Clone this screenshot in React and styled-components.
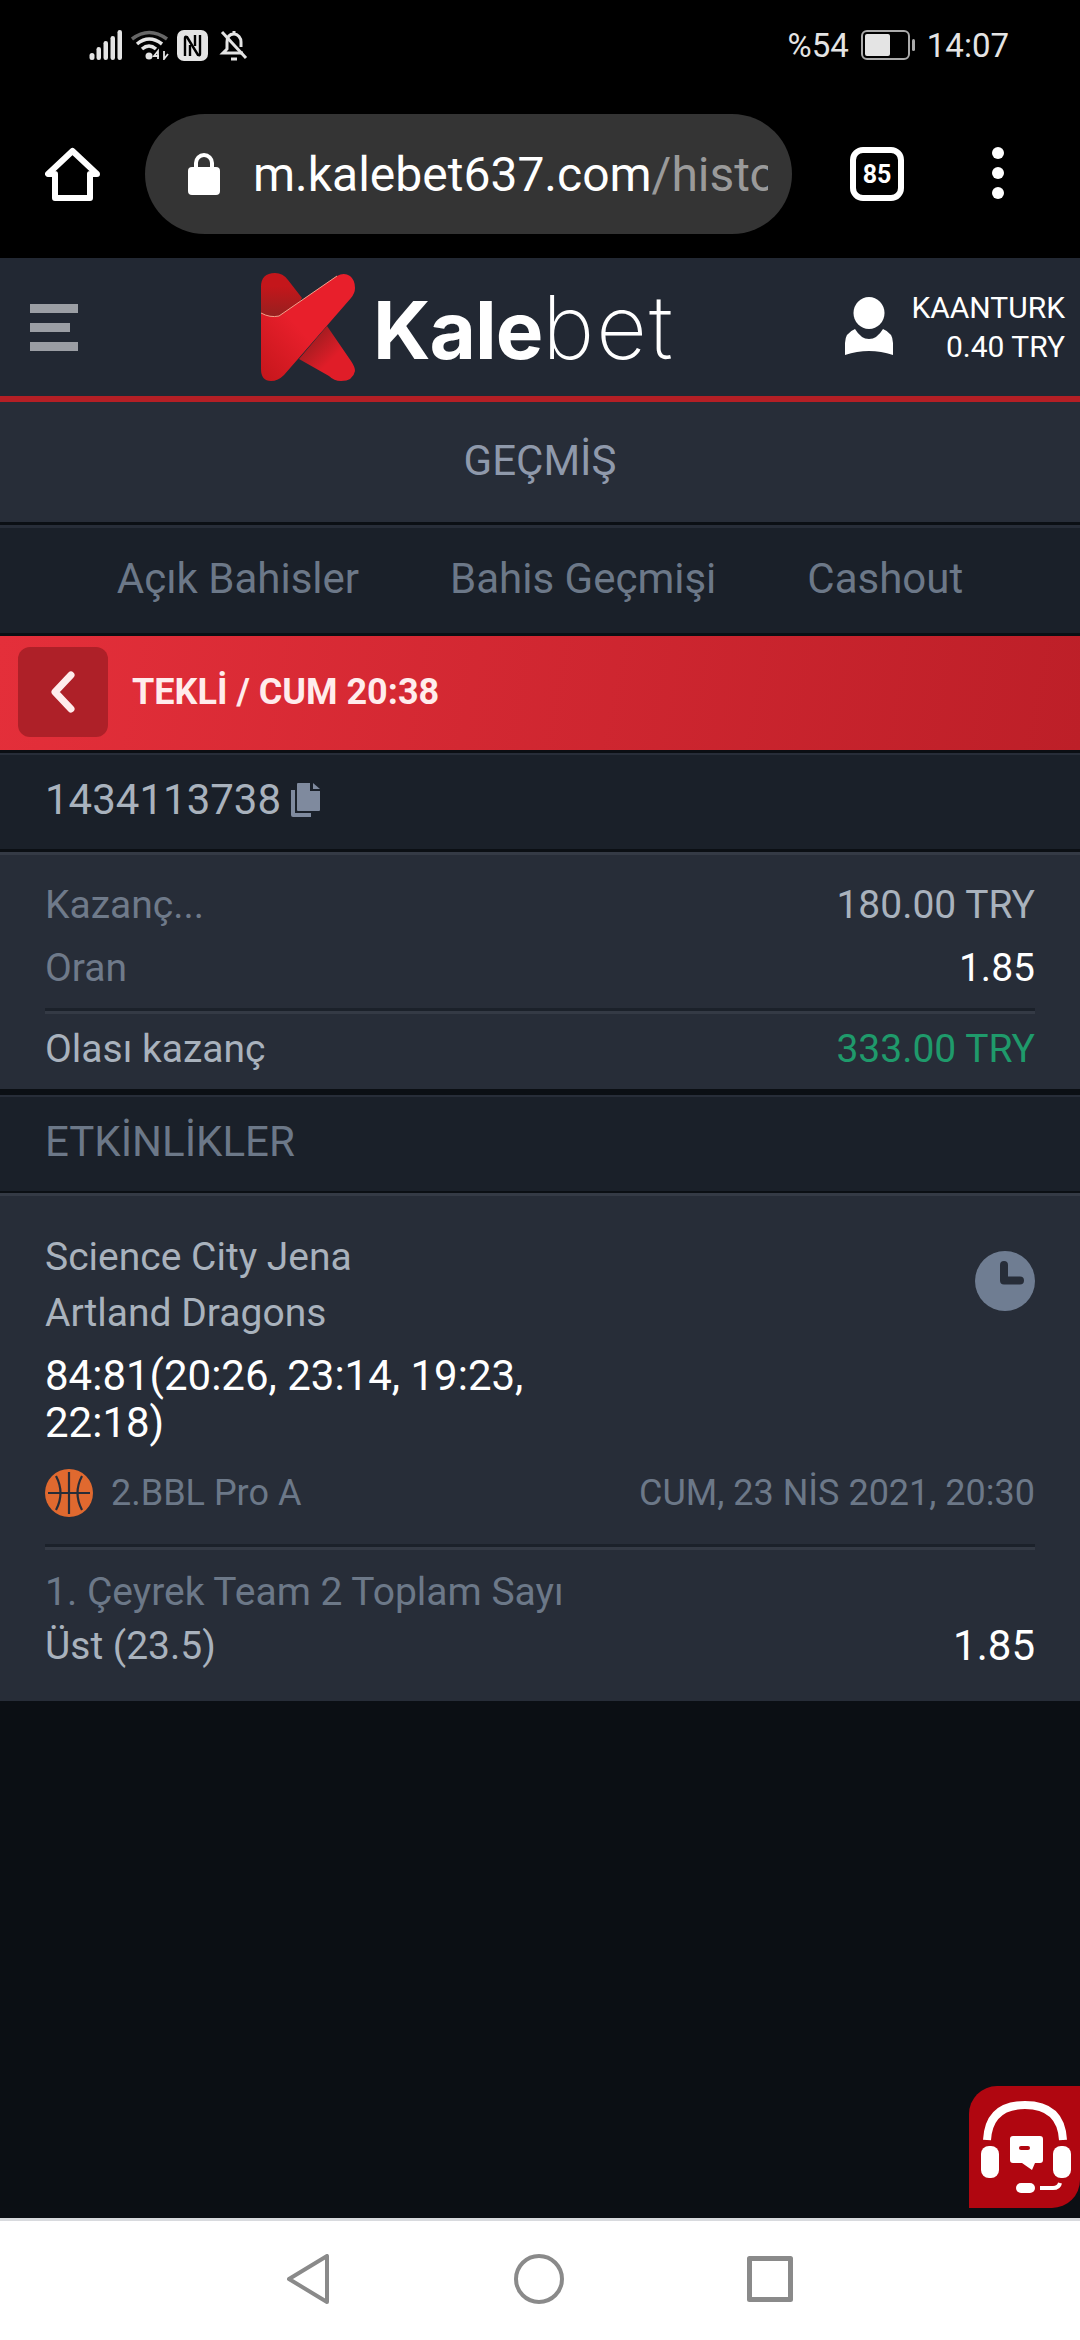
import React from 'react';
import styled, { createGlobalStyle } from 'styled-components';

const GlobalStyle = createGlobalStyle`
  html, body {
    margin: 0;
    padding: 0;
    background: #0b0f14;
  }
  * {
    box-sizing: border-box;
  }
`;

const Page = styled.div`
  position: relative;
  width: 1080px;
  height: 2340px;
  display: flex;
  flex-direction: column;
  overflow: hidden;
  font-family: Roboto, "Liberation Sans", sans-serif;
  font-size: 42px;
  background: #0b0f14;
`;

const BrowserChrome = styled.div`
  height: 258px;
  flex: none;
  background: #000;
`;

const StatusBar = styled.div`
  height: 90px;
  padding: 0 71px 0 89px;
  display: flex;
  align-items: center;
  justify-content: space-between;
  color: #e4e4e4;
  font-size: 33px;
`;

const StatusGroup = styled.div`
  display: flex;
  align-items: center;
  gap: ${(p) => p.$gap}px;
`;

const Toolbar = styled.div`
  height: 168px;
  padding: 24px 0 24px 45px;
  display: flex;
  align-items: flex-start;
`;

const HomeButton = styled.svg`
  width: 56px;
  height: 56px;
  margin-top: 33px;
  flex: none;
`;

const UrlPill = styled.div`
  width: 647px;
  height: 120px;
  margin-left: 44px;
  padding: 0 24px 0 43px;
  display: flex;
  align-items: center;
  gap: 33px;
  border-radius: 60px;
  background: #343434;
  flex: none;
`;

const UrlText = styled.div`
  flex: 1;
  overflow: hidden;
  white-space: nowrap;
  font-size: 48px;
  color: #fff;

  span {
    color: #9a9a9a;
  }
`;

const TabCount = styled.div`
  width: 54px;
  height: 54px;
  margin: 33px 0 0 58px;
  display: flex;
  align-items: center;
  justify-content: center;
  flex: none;
  border: 6px solid #fff;
  border-radius: 13px;
  color: #fff;
  font-size: 25px;
  font-weight: 700;
`;

const MenuDots = styled.svg`
  width: 14px;
  height: 52px;
  margin: 33px 0 0 87px;
  flex: none;
`;

const SiteHeader = styled.header`
  height: 144px;
  flex: none;
  padding: 0 15px 0 30px;
  display: flex;
  align-items: center;
  background: #222833;
  border-bottom: 6px solid #b51f25;
`;

const Burger = styled.div`
  width: 48px;
  display: flex;
  flex-direction: column;
  gap: 10px;
  flex: none;
`;

const BurgerBar = styled.div`
  height: 9px;
  width: ${(p) => p.$w}px;
  background: #9b9ea4;
`;

const Logo = styled.div`
  margin-left: 183px;
  display: flex;
  align-items: center;
  gap: 18px;
`;

const Wordmark = styled.div`
  font-family: Inter, "Noto Sans", sans-serif;
  font-size: 80px;
  font-weight: 700;
  line-height: 1;
  letter-spacing: -1px;
  color: #fff;

  span {
    font-size: 88px;
    font-weight: 200;
    letter-spacing: 2px;
  }
`;

const Account = styled.div`
  margin-left: auto;
  display: flex;
  align-items: center;
  gap: 18px;
`;

const AccountText = styled.div`
  text-align: right;
  color: #fff;
  font-size: 30px;
  line-height: 39px;
`;

const PageTitle = styled.div`
  height: 123px;
  flex: none;
  padding-bottom: 3px;
  display: flex;
  align-items: center;
  justify-content: center;
  background: #272d38;
  border-bottom: 3px solid #0b0f14;
  color: #8f99ab;
`;

const Tabs = styled.nav`
  height: 111px;
  flex: none;
  padding-bottom: 5px;
  display: flex;
  align-items: center;
  justify-content: center;
  gap: 91px;
  background: #1a2029;
  border-top: 3px solid #272d38;
  border-bottom: 3px solid #0b0f14;
  color: #6c7888;
`;

const BetBar = styled.div`
  height: 117px;
  flex: none;
  padding: 12px 0 15px 18px;
  display: flex;
  align-items: center;
  gap: 24px;
  background: linear-gradient(100deg, #e42f3a 0%, #bd1f28 100%);
  border-bottom: 3px solid #0b0f14;
  color: #ffecec;
  font-size: 36px;
  font-weight: 700;
`;

const BackButton = styled.div`
  width: 90px;
  height: 90px;
  display: flex;
  align-items: center;
  justify-content: center;
  border-radius: 12px;
  background: #ae2028;
`;

const Strip = styled.div`
  flex: none;
  height: ${(p) => p.$h}px;
  padding: 0 45px 5px;
  display: flex;
  align-items: center;
  gap: 10px;
  background: #1a2029;
  border-top: 2px solid #272d38;
  border-bottom: ${(p) => p.$bottom}px solid #0b0f14;
  color: ${(p) => p.$color};
`;

const Summary = styled.section`
  height: 243px;
  flex: none;
  padding: 19px 45px 0;
  background: #272d38;
  border-top: 3px solid #343a45;
  border-bottom: 6px solid #0b0f14;
`;

const Row = styled.div`
  height: ${(p) => p.$h}px;
  margin-top: ${(p) => p.$top || 0}px;
  display: flex;
  align-items: center;
  justify-content: space-between;
  color: ${(p) => p.$color};
  font-size: 39px;
  line-height: 1;
`;

const Value = styled.span`
  color: ${(p) => p.$color};
  font-size: ${(p) => p.$size || 39}px;
`;

const Divider = styled.div`
  height: 6px;
  margin-top: ${(p) => p.$top}px;
  background: linear-gradient(#1b212a 50%, #343a45 50%);
`;

const EventCard = styled.section`
  height: 508px;
  flex: none;
  padding: 33px 45px 0;
  background: #272d38;
  border-top: 3px solid #343a45;
`;

const EventTop = styled.div`
  display: flex;
  justify-content: space-between;
`;

const Teams = styled.div`
  width: 520px;
`;

const Team = styled.div`
  height: 56px;
  line-height: 56px;
  font-size: 39px;
  color: #a9b2bd;
`;

const Score = styled.div`
  margin-top: 11px;
  color: #fff;
  line-height: 47px;
`;

const ClockBadge = styled.svg`
  width: 60px;
  height: 60px;
  margin-top: 22px;
  flex: none;
`;

const LeagueRow = styled.div`
  height: 48px;
  margin-top: 23px;
  display: flex;
  align-items: center;
  color: #6c7888;
  font-size: 36px;
`;

const League = styled.div`
  margin-left: 18px;
`;

const EventDate = styled.div`
  margin-left: auto;
`;

const Market = styled.div`
  height: 40px;
  margin-top: 22px;
  line-height: 40px;
  font-size: 39px;
  color: #6c7888;
`;

const Spacer = styled.div`
  flex: 1;
`;

const NavBar = styled.div`
  height: 122px;
  flex: none;
  padding-bottom: 3px;
  display: flex;
  align-items: center;
  justify-content: center;
  gap: 183px;
  background: #fff;
  border-top: 3px solid #d8dade;
`;

const SupportButton = styled.div`
  position: absolute;
  right: 0;
  bottom: 132px;
  width: 111px;
  height: 122px;
  border-radius: 28px 0 28px 0;
  background: #b00610;
`;

const Gear = {
  Signal: () => (
    <svg width="34" height="30" viewBox="0 0 34 30" fill="#e4e4e4">
      <rect x="0.5" y="23" width="5" height="7" rx="2.5" />
      <rect x="7.5" y="17" width="4.5" height="13" rx="2.2" />
      <rect x="14.5" y="11" width="4.5" height="19" rx="2.2" />
      <rect x="21.5" y="6" width="4.5" height="24" rx="2.2" />
      <rect x="28.5" y="0" width="4.5" height="30" rx="2.2" />
    </svg>
  ),
  Wifi: () => (
    <svg width="38" height="30" viewBox="0 0 38 30" fill="none">
      <path d="M1 9 Q18 -4 36 9" stroke="#666" strokeWidth="3.5" />
      <path d="M6 14 Q18 4 31 14" stroke="#e4e4e4" strokeWidth="3.5" />
      <path d="M11 19 Q18 13 25 19" stroke="#e4e4e4" strokeWidth="3.5" />
      <circle cx="18" cy="26" r="3.5" fill="#e4e4e4" />
      <path d="M27 29V21l-4 5h5M33 21v8l4-5" stroke="#e4e4e4" strokeWidth="1.8" />
    </svg>
  ),
  Nfc: () => (
    <svg width="31" height="31" viewBox="0 0 31 31">
      <rect width="31" height="31" rx="7" fill="#e4e4e4" />
      <path d="M8 26V8q0-2 2-1l11 18q2 1 2-1V5" fill="none" stroke="#000" strokeWidth="2.4" />
      <path d="M13 26V15M18 5v11" fill="none" stroke="#000" strokeWidth="2.4" />
    </svg>
  ),
  Bell: () => (
    <svg width="32" height="31" viewBox="-4 0 32 31" fill="none" stroke="#e4e4e4" strokeWidth="3">
      <path d="M14 4c-5 0-7 3-7 8v7l-4 4h20M21 17v-5c0-4-3-8-7-8" />
      <path d="M2 2l24 26" />
      <path d="M11 29h6" />
      <path d="M14 1v3" />
    </svg>
  ),
  Battery: () => (
    <svg width="54" height="30" viewBox="0 0 54 30">
      <rect x="1" y="1" width="47" height="28" rx="5" fill="none" stroke="#aaa" strokeWidth="2" />
      <rect x="4" y="4" width="25" height="22" rx="2" fill="#e4e4e4" />
      <rect x="51" y="9" width="3" height="12" rx="1.5" fill="#aaa" />
    </svg>
  ),
  Lock: () => (
    <svg width="32" height="42" viewBox="0 0 32 42" style={{ flex: 'none' }}>
      <path d="M8 16V10a8 8 0 0 1 16 0v6" fill="none" stroke="#fff" strokeWidth="4" />
      <rect y="14" width="32" height="28" rx="4" fill="#fff" />
    </svg>
  ),
  KaleLogo: () => (
    <svg width="94" height="108" viewBox="0 0 94 108">
      <defs>
        <linearGradient id="armTop" x1="0" y1="1" x2="1" y2="0">
          <stop offset="0" stopColor="#c4161b" />
          <stop offset="0.45" stopColor="#e81f2b" />
          <stop offset="1" stopColor="#e81f2b" />
        </linearGradient>
        <linearGradient id="foldLeft" x1="0.5" y1="0" x2="0.5" y2="1">
          <stop offset="0.3" stopColor="#c4161b" />
          <stop offset="1" stopColor="#96201f" />
        </linearGradient>
        <linearGradient id="foldLow" x1="0" y1="0" x2="1" y2="1">
          <stop offset="0.1" stopColor="#8f1c1e" />
          <stop offset="0.6" stopColor="#e01d28" />
        </linearGradient>
      </defs>
      <path d="M0 14Q0 0 14 0Q22 0 27 7L41 25L30 44L0 44Z" fill="url(#foldLeft)" />
      <path d="M38 86L66 53L90 88Q94 94 94 98Q92 108 80 108Q73 108 68 103Z" fill="url(#foldLow)" />
      <path d="M76 3Q83 -1 89 3Q94 7 94 15Q94 20 90 25L23 102Q17 108 10 108Q0 108 0 96L0 40Q9 45 18 43Z" fill="url(#armTop)" />
      <path d="M0 40Q9 45 18 43L76 3" fill="none" stroke="#f3a08a" strokeWidth="1" />
    </svg>
  ),
  User: () => (
    <svg width="48" height="60" viewBox="0 0 48 60" fill="#fff">
      <ellipse cx="24" cy="16" rx="15.5" ry="16" />
      <path d="M10 32Q16 42 24 42Q32 42 38 32Q48 36 48 46V58Q36 54 24 54Q12 54 0 58V46Q0 36 10 32Z" />
    </svg>
  ),
  Copy: () => (
    <svg width="29" height="34" viewBox="0 0 29 34" fill="#7f8a9e" style={{ flex: 'none' }}>
      <path d="M7 0h12v8h10v19a1 1 0 0 1-1 1H7a1 1 0 0 1-1-1V1a1 1 0 0 1 1-1z" />
      <path d="M22 0l7 6h-7z" />
      <path d="M0 7h4v23h16v4H2a2 2 0 0 1-2-2z" />
    </svg>
  ),
  Ball: () => (
    <svg width="48" height="48" viewBox="0 0 48 48" style={{ flex: 'none' }}>
      <circle cx="24" cy="24" r="24" fill="#e0692f" />
      <g fill="none" stroke="#272d38" strokeWidth="2.2">
        <path d="M24 3v42M3 24h42" />
        <path d="M11 7Q20 24 11 41M37 7Q28 24 37 41" />
      </g>
    </svg>
  ),
  Headset: () => (
    <svg width="111" height="122" viewBox="0 0 111 122">
      <path d="M18 54Q20 19 56 19Q92 19 94 54" fill="none" stroke="#fff" strokeWidth="8" />
      <rect x="12" y="60" width="18" height="32" rx="8" fill="#fff" />
      <rect x="84" y="60" width="18" height="32" rx="8" fill="#fff" />
      <path d="M44 50H71a3 3 0 0 1 3 3V74a3 3 0 0 1-3 3H66L63 84L53 77H44a3 3 0 0 1-3-3V53a3 3 0 0 1 3-3Z" fill="#fff" />
      <rect x="50" y="60" width="11" height="4" rx="2" fill="#b00610" />
      <rect x="47" y="97" width="19" height="10" rx="5" fill="#fff" />
      <path d="M71 102H84Q90 102 91 97" fill="none" stroke="#fff" strokeWidth="4" />
    </svg>
  ),
};

const App = () => (
  <Page>
    <GlobalStyle />
    <BrowserChrome>
      <StatusBar>
        <StatusGroup $gap={8}>
          <Gear.Signal />
          <Gear.Wifi />
          <Gear.Nfc />
          <Gear.Bell />
        </StatusGroup>
        <StatusGroup $gap={12}>
          <span>%54</span>
          <Gear.Battery />
          <span>14:07</span>
        </StatusGroup>
      </StatusBar>
      <Toolbar>
        <HomeButton viewBox="0 0 56 56" fill="none" stroke="#fff" strokeWidth="6" strokeLinejoin="round">
          <path d="M27.5 4L3 27H10V51H45V27H52Z" />
        </HomeButton>
        <UrlPill>
          <Gear.Lock />
          <UrlText>m.kalebet637.com<span>/history</span></UrlText>
        </UrlPill>
        <TabCount>85</TabCount>
        <MenuDots viewBox="0 0 14 52" fill="#fff">
          <circle cx="7" cy="6" r="6" />
          <circle cx="7" cy="26" r="6" />
          <circle cx="7" cy="46" r="6" />
        </MenuDots>
      </Toolbar>
    </BrowserChrome>

    <SiteHeader>
      <Burger>
        <BurgerBar $w={48} />
        <BurgerBar $w={40} />
        <BurgerBar $w={48} />
      </Burger>
      <Logo>
        <Gear.KaleLogo />
        <Wordmark>Kale<span>bet</span></Wordmark>
      </Logo>
      <Account>
        <Gear.User />
        <AccountText>
          <div>KAANTURK</div>
          <div>0.40 TRY</div>
        </AccountText>
      </Account>
    </SiteHeader>

    <PageTitle>GEÇMİŞ</PageTitle>
    <Tabs>
      <span>Açık Bahisler</span>
      <span>Bahis Geçmişi</span>
      <span>Cashout</span>
    </Tabs>

    <BetBar>
      <BackButton>
        <svg width="26" height="42" viewBox="0 0 26 42" fill="none" stroke="#ffecec" strokeWidth="7" strokeLinecap="round" strokeLinejoin="round">
          <path d="M21 4L5 21L21 38" />
        </svg>
      </BackButton>
      TEKLİ / CUM 20:38
    </BetBar>

    <Strip $h={99} $bottom={3} $color="#a9b2bd">
      1434113738
      <Gear.Copy />
    </Strip>

    <Summary>
      <Row $h={63} $color="#6f7a8a">
        <span>Kazanç...</span>
        <Value $color="#a9b2bd">180.00 TRY</Value>
      </Row>
      <Row $h={63} $color="#6f7a8a">
        <span>Oran</span>
        <Value $color="#fff">1.85</Value>
      </Row>
      <Divider $top={8} />
      <Row $h={70} $color="#a9b2bd">
        <span>Olası kazanç</span>
        <Value $color="#1f9a6b">333.00 TRY</Value>
      </Row>
    </Summary>

    <Strip $h={98} $bottom={2} $color="#6c7888">ETKİNLİKLER</Strip>

    <EventCard>
      <EventTop>
        <Teams>
          <Team>Science City Jena</Team>
          <Team>Artland Dragons</Team>
          <Score>84:81(20:26, 23:14, 19:23, 22:18)</Score>
        </Teams>
        <ClockBadge viewBox="0 0 60 60">
          <circle cx="30" cy="30" r="30" fill="#6f7d92" />
          <path d="M29 14V29.5H45" fill="none" stroke="#272d38" strokeWidth="8" strokeLinecap="round" strokeLinejoin="round" />
        </ClockBadge>
      </EventTop>
      <LeagueRow>
        <Gear.Ball />
        <League>2.BBL Pro A</League>
        <EventDate>CUM, 23 NİS 2021, 20:30</EventDate>
      </LeagueRow>
      <Divider $top={27} />
      <Market>1. Çeyrek Team 2 Toplam Sayı</Market>
      <Row $h={50} $top={9} $color="#a9b2bd">
        <span>Üst (23.5)</span>
        <Value $color="#fff" $size={42}>1.85</Value>
      </Row>
    </EventCard>

    <Spacer />

    <SupportButton>
      <Gear.Headset />
    </SupportButton>

    <NavBar>
      <svg width="44" height="50" viewBox="0 0 44 50" fill="none" stroke="#8a8a8a" strokeWidth="4" strokeLinejoin="round">
        <path d="M40 2V48L2 25Z" />
      </svg>
      <svg width="50" height="50" viewBox="0 0 50 50" fill="none" stroke="#8a8a8a" strokeWidth="4">
        <circle cx="25" cy="25" r="23" />
      </svg>
      <svg width="46" height="46" viewBox="0 0 46 46" fill="none" stroke="#8a8a8a" strokeWidth="5" strokeLinejoin="round">
        <rect x="2.5" y="2.5" width="41" height="41" />
      </svg>
    </NavBar>
  </Page>
);

export default App;
